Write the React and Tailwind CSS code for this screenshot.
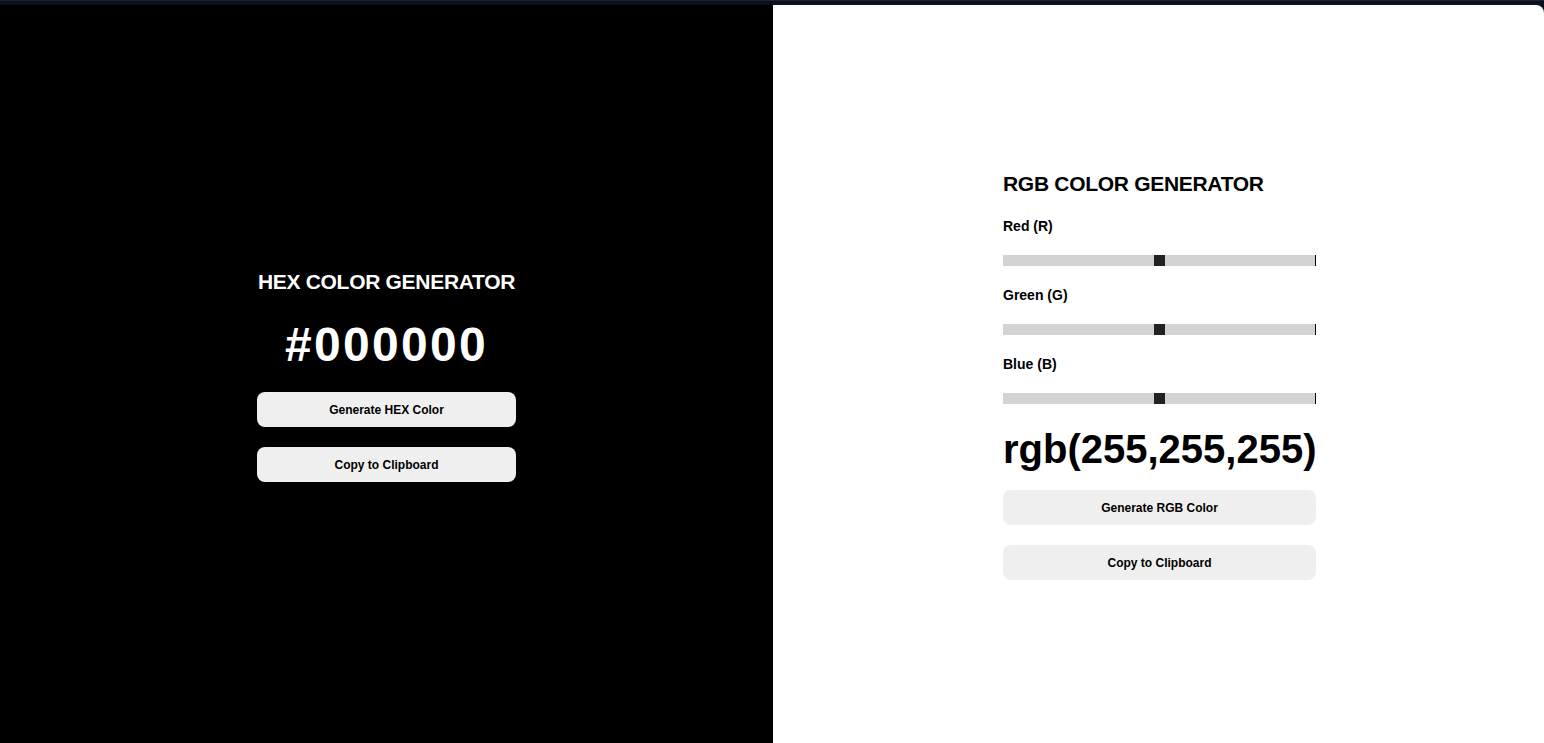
import { useState } from 'react';

const FONT = { fontFamily: '"Liberation Sans", Arial, sans-serif' };

function Slider({ label, value, onChange }) {
  return (
    <div className="flex flex-col">
      <label className="text-[14px] font-bold leading-4 text-black">{label}</label>
      <input
        type="range"
        min="0"
        max="255"
        value={value}
        onChange={(e) => onChange(Number(e.target.value))}
        className="mt-[21px] w-full h-[11px] appearance-none bg-[#d3d3d3] border-r border-black outline-none [&::-webkit-slider-thumb]:appearance-none [&::-webkit-slider-thumb]:w-[11px] [&::-webkit-slider-thumb]:h-[11px] [&::-webkit-slider-thumb]:bg-[#222222] [&::-webkit-slider-thumb]:border-0"
      />
    </div>
  );
}

function Button({ children, onClick }) {
  return (
    <button
      onClick={onClick}
      className="w-full h-[35px] rounded-lg bg-[#efefef] text-[12px] font-bold text-black"
    >
      {children}
    </button>
  );
}

export default function App() {
  const [hex] = useState('#000000');
  const [r, setR] = useState(128);
  const [g, setG] = useState(128);
  const [b, setB] = useState(128);

  return (
    <div className="w-full h-[743px] bg-[#0b1020] border-t border-[#1c2236] flex flex-col" style={FONT}>
      <div className="h-[4px]" />
      <div className="flex flex-1">
        {/* HEX side */}
        <div className="w-[773px] bg-black flex items-center justify-center pt-[4px]">
          <div className="w-[259px] flex flex-col items-center">
            <h2 className="text-[21px] leading-6 font-bold text-white tracking-[-0.3px]">HEX COLOR GENERATOR</h2>
            <div className="mt-[27px] text-[48px] leading-[48px] font-bold text-white tracking-[2.3px]">{hex}</div>
            <div className="mt-[23px] w-full flex flex-col gap-5">
              <Button>Generate HEX Color</Button>
              <Button>Copy to Clipboard</Button>
            </div>
          </div>
        </div>

        {/* RGB side */}
        <div className="flex-1 bg-white rounded-tr-lg flex items-center justify-center pt-[4px] pl-[2px]">
          <div className="w-[313px] flex flex-col">
            <h2 className="text-[21px] leading-6 font-bold text-black tracking-[-0.3px]">RGB COLOR GENERATOR</h2>
            <div className="mt-[22px] flex flex-col gap-[21px]">
              <Slider label="Red (R)" value={r} onChange={setR} />
              <Slider label="Green (G)" value={g} onChange={setG} />
              <Slider label="Blue (B)" value={b} onChange={setB} />
            </div>
            <div className="mt-[25px] text-[40px] leading-[40px] font-bold text-black">rgb(255,255,255)</div>
            <div className="mt-[21px] flex flex-col gap-5">
              <Button>Generate RGB Color</Button>
              <Button>Copy to Clipboard</Button>
            </div>
          </div>
        </div>
      </div>
    </div>
  );
}
